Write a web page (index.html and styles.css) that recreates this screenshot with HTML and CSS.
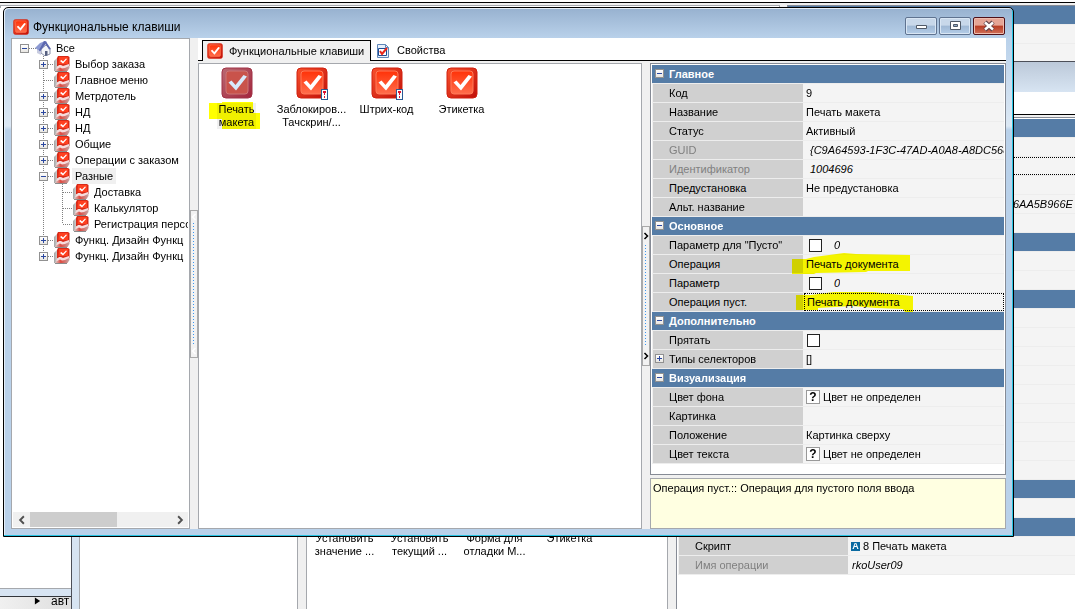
FILE: index.html
```html
<!DOCTYPE html>
<html lang="ru">
<head>
<meta charset="utf-8">
<title>Функциональные клавиши</title>
<link rel="stylesheet" href="styles.css">
</head>
<body>
<svg class="defs" aria-hidden="true">
  <defs>
    <linearGradient id="red" x1="0" y1="0" x2="1" y2="1"><stop offset="0" stop-color="#f8512c"/><stop offset="1" stop-color="#c00f08"/></linearGradient>
    <linearGradient id="redIn" x1="0" y1="0" x2="0" y2="1"><stop offset="0" stop-color="#ff3208"/><stop offset="1" stop-color="#ff6d4c"/></linearGradient>
    <linearGradient id="dim" x1="0" y1="0" x2="1" y2="1"><stop offset="0" stop-color="#b96a72"/><stop offset="1" stop-color="#a3243c"/></linearGradient>
    <linearGradient id="flap" x1="0" y1="0" x2="1" y2="0"><stop offset="0" stop-color="#d8d0d0"/><stop offset=".4" stop-color="#e0483e"/><stop offset="1" stop-color="#c4a8a8"/></linearGradient>
    <linearGradient id="paper" x1="0" y1="0" x2="1" y2="0"><stop offset="0" stop-color="#a4a4a4"/><stop offset="1" stop-color="#f2f2f2"/></linearGradient>
    <symbol id="key" viewBox="0 0 32 32">
      <rect x="1" y="1" width="30" height="30" rx="4" fill="url(#red)" stroke="#d0200f"/>
      <rect x="5" y="4" width="22" height="23" rx="3" fill="url(#redIn)" stroke="#ff7a58"/>
      <path d="M7.500 15.500l3-2 4 4.500 8-10 3.500 1.500-11 14z" fill="#fff"/>
    </symbol>
    <symbol id="key-dim" viewBox="0 0 32 32">
      <rect x="1" y="1" width="30" height="30" rx="4" fill="url(#dim)" stroke="#a03246"/>
      <rect x="5" y="4" width="22" height="23" rx="3" fill="#c9534b" stroke="#cc7676"/>
      <path d="M7.500 15.500l3-2 4 4.500 8-10 3.500 1.500-11 14z" fill="#d8eafc"/>
    </symbol>
    <symbol id="folder" viewBox="0 0 16 16">
      <path d="M0 5l3-3h3v8l-4 5H0z" fill="url(#paper)"/>
      <path d="M4 0h10l1.500 1v9H3V2z" fill="#d82a18"/>
      <path d="M5 1h9v7H4.500z" fill="#ff4020"/>
      <path d="M6 5l1.500-1L9 5.500l3-3 1 .5L9 7.500z" fill="#fff"/>
      <path d="M1 15l3-5h3l2 1 6.500-2v3l-2 3z" fill="url(#flap)"/>
      <path d="M3 11l2-2h2l2 1 6-2v2l-4 2-3 .5-2-1-4 2z" fill="#f6dcdc"/>
      <path d="M1 15.500h12" stroke="#8c8c8c"/>
    </symbol>
    <symbol id="home" viewBox="0 0 16 16">
      <path d="M6 9l5-4 4 4v5l-5 2-4-3z" fill="#f4f6fa" stroke="#8a90a8"/>
      <path d="M2 9v4l4 2V9z" fill="#c8cce0"/>
      <path d="M0 8l5-5 5-2 2 1-7 9z" fill="#8c99d2"/>
      <path d="M9 1l2 .5L16 9l-2 .5L10.500 4 5 11.500 4 10z" fill="#5c68b0"/>
      <path d="M10 11h2.500v4.500l-2.500.5z" fill="#566080"/>
    </symbol>
    <symbol id="props" viewBox="0 0 14 16">
      <path d="M1.500 1.500h8l3 3v10h-11z" fill="#e7f0fc" stroke="#5f86b8"/>
      <path d="M9.500 1.500v3h3" fill="none" stroke="#5f86b8"/>
      <path d="M2.500 5.500h8v7h-8z" fill="#fff" stroke="#1c4c94"/>
      <path d="M4 8l2 3 5-6" fill="none" stroke="#e8281c" stroke-width="2"/>
    </symbol>
    <symbol id="alert" viewBox="0 0 7 11">
      <path d="M0 0h7v11H0z" fill="#2c5a94"/>
      <path d="M1 1h5v9H1z" fill="#fff"/>
      <path d="M3 2h1v4H3zM3 7h1v2H3z" fill="#e01030"/>
      <path d="M2 2h3v2H2z" fill="#e01030"/>
    </symbol>
    <symbol id="chev" viewBox="0 0 8 8"><path d="M2.500 1l3 3-3 3" fill="none" stroke="currentColor" stroke-width="1.500"/></symbol>
  </defs>
</svg>

<main class="desktop">

  <section class="window back-top" aria-label="Окно">
    <div class="panel"></div>
    <table class="grid">
      <tbody>
        <tr class="group"><th colspan="2"></th></tr>
        <tr><th></th><td></td></tr>
        <tr><th></th><td></td></tr>
      </tbody>
    </table>
  </section>

  <section class="window back-left" aria-label="Окно меню">
    <div class="blank"></div>
    <div class="edge"></div>
    <div class="menu-strip"><svg viewBox="0 0 8 8"><path d="M1 0l6 4-6 4z"/></svg><span>авт</span></div>
  </section>

  <section class="window back-main" aria-label="Окно операций">
    <div class="back-title"></div>
    <div class="back-tabs"></div>
    <div class="back-body">
      <div class="panel back-tree"></div>
      <ul class="panel keys back-keys">
        <li>Установить значение ...</li>
        <li>Установить текущий ...</li>
        <li>Форма для отладки М...</li>
        <li>Этикетка</li>
      </ul>
      <div class="grid-box back-grid">
        <table class="grid">
          <colgroup><col class="name-wide"><col></colgroup>
          <tbody>
            <tr class="group"><th colspan="2"></th></tr>
            <tr><th></th><td></td></tr>
            <tr class="focus"><th></th><td><span></span></td></tr>
            <tr><th></th><td></td></tr>
            <tr><th></th><td class="tail"><i>D6AA5B966E</i></td></tr>
            <tr><th></th><td></td></tr>
            <tr class="group"><th colspan="2"></th></tr>
            <tr><th></th><td></td></tr>
            <tr><th></th><td></td></tr>
            <tr class="group"><th colspan="2"></th></tr>
            <tr><th></th><td></td></tr>
            <tr><th></th><td></td></tr>
            <tr><th></th><td></td></tr>
            <tr><th></th><td></td></tr>
            <tr><th></th><td></td></tr>
            <tr><th></th><td></td></tr>
            <tr><th></th><td></td></tr>
            <tr><th></th><td></td></tr>
            <tr><th></th><td></td></tr>
            <tr class="group"><th colspan="2"></th></tr>
            <tr><th></th><td></td></tr>
            <tr class="group"><th colspan="2"></th></tr>
            <tr><th>Скрипт</th><td><span><b class="script">A</b>8 Печать макета</span></td></tr>
            <tr class="off"><th>Имя операции</th><td><i class="flush">rkoUser09</i></td></tr>
          </tbody>
        </table>
      </div>
    </div>
  </section>

  <section class="window front" aria-label="Функциональные клавиши">
    <header class="title">
      <svg class="ico"><use href="#key"/></svg>
      <h1>Функциональные клавиши</h1>
      <div class="sys">
        <button type="button" aria-label="Свернуть"><svg viewBox="0 0 30 16"><path d="M10.500 7.500h10v3h-10z" fill="#fff" stroke="#505a68"/></svg></button>
        <button type="button" aria-label="Развернуть"><svg viewBox="0 0 30 16"><path d="M10.500 3.500h10v8h-10z" fill="#fff" stroke="#505a68"/><path d="M13.500 6.500h4v2h-4z" fill="#8fa9c8" stroke="#505a68"/></svg></button>
        <button type="button" class="close" aria-label="Закрыть"><svg viewBox="0 0 30 16"><path d="M11 4l8 8M19 4l-8 8" stroke="#5c4048" stroke-width="4.500"/><path d="M11 4.500l8 7M19 4.500l-8 7" stroke="#fff" stroke-width="2.500"/></svg></button>
      </div>
    </header>

    <div class="body">
      <nav class="panel tree" aria-label="Группы">
        <ul>
          <li>
            <div class="node"><button type="button" class="box minus" aria-label="Свернуть"></button><svg class="ico"><use href="#home"/></svg><span>Все</span></div>
            <ul>
              <li><div class="node"><button type="button" class="box plus" aria-label="Развернуть"></button><svg class="ico"><use href="#folder"/></svg><span>Выбор заказа</span></div></li>
              <li><div class="node leaf"><svg class="ico"><use href="#folder"/></svg><span>Главное меню</span></div></li>
              <li><div class="node"><button type="button" class="box plus" aria-label="Развернуть"></button><svg class="ico"><use href="#folder"/></svg><span>Метрдотель</span></div></li>
              <li><div class="node"><button type="button" class="box plus" aria-label="Развернуть"></button><svg class="ico"><use href="#folder"/></svg><span>НД</span></div></li>
              <li><div class="node"><button type="button" class="box plus" aria-label="Развернуть"></button><svg class="ico"><use href="#folder"/></svg><span>НД</span></div></li>
              <li><div class="node"><button type="button" class="box plus" aria-label="Развернуть"></button><svg class="ico"><use href="#folder"/></svg><span>Общие</span></div></li>
              <li><div class="node"><button type="button" class="box plus" aria-label="Развернуть"></button><svg class="ico"><use href="#folder"/></svg><span>Операции с заказом</span></div></li>
              <li>
                <div class="node current"><button type="button" class="box minus" aria-label="Свернуть"></button><svg class="ico"><use href="#folder"/></svg><span>Разные</span></div>
                <ul>
                  <li><div class="node leaf"><svg class="ico"><use href="#folder"/></svg><span>Доставка</span></div></li>
                  <li><div class="node leaf"><svg class="ico"><use href="#folder"/></svg><span>Калькулятор</span></div></li>
                  <li><div class="node leaf"><svg class="ico"><use href="#folder"/></svg><span>Регистрация персо</span></div></li>
                </ul>
              </li>
              <li><div class="node"><button type="button" class="box plus" aria-label="Развернуть"></button><svg class="ico"><use href="#folder"/></svg><span>Функц. Дизайн Функц</span></div></li>
              <li><div class="node"><button type="button" class="box plus" aria-label="Развернуть"></button><svg class="ico"><use href="#folder"/></svg><span>Функц. Дизайн Функц</span></div></li>
            </ul>
          </li>
        </ul>
        <div class="hscroll">
          <button type="button" aria-label="Влево"><svg class="flip"><use href="#chev"/></svg></button>
          <div class="track"><div class="thumb"></div></div>
          <button type="button" aria-label="Вправо"><svg><use href="#chev"/></svg></button>
        </div>
      </nav>

      <div class="splitter"><div class="grip pale"><svg class="flip"><use href="#chev"/></svg><i></i><svg class="flip"><use href="#chev"/></svg></div></div>

      <div class="work">
        <div class="tabs" role="tablist">
          <button type="button" role="tab" aria-selected="true" class="tab on"><svg class="ico"><use href="#key"/></svg>Функциональные клавиши</button>
          <button type="button" role="tab" aria-selected="false" class="tab"><svg class="ico"><use href="#props"/></svg>Свойства</button>
        </div>
        <div class="panes">
          <ul class="panel keys">
            <li class="picked"><svg class="big"><use href="#key-dim"/></svg><span>Печать<br>макета</span>
              <svg class="mark" viewBox="0 0 52 28"><path d="M0 1H13V0H44V11H51V27H13V17H0z"/></svg></li>
            <li><svg class="big"><use href="#key"/></svg><svg class="alert"><use href="#alert"/></svg><span>Заблокиров...<br>Тачскрин/...</span></li>
            <li><svg class="big"><use href="#key"/></svg><svg class="alert"><use href="#alert"/></svg><span>Штрих-код</span></li>
            <li><svg class="big"><use href="#key"/></svg><span>Этикетка</span></li>
          </ul>

          <div class="splitter"><div class="grip"><svg><use href="#chev"/></svg><i></i><svg><use href="#chev"/></svg></div></div>

          <div class="side">
            <div class="grid-box">
              <table class="grid">
                <colgroup><col class="name"><col></colgroup>
                <tbody>
                  <tr class="group"><th colspan="2"><button type="button" class="box minus" aria-label="Свернуть"></button>Главное</th></tr>
                  <tr><th>Код</th><td>9</td></tr>
                  <tr><th>Название</th><td>Печать макета</td></tr>
                  <tr><th>Статус</th><td>Активный</td></tr>
                  <tr class="off"><th>GUID</th><td><i>{C9A64593-1F3C-47AD-A0A8-A8DC568</i></td></tr>
                  <tr class="off"><th>Идентификатор</th><td><i>1004696</i></td></tr>
                  <tr><th>Предустановка</th><td>Не предустановка</td></tr>
                  <tr><th>Альт. название</th><td></td></tr>
                  <tr class="group"><th colspan="2"><button type="button" class="box minus" aria-label="Свернуть"></button>Основное</th></tr>
                  <tr><th><label for="p1">Параметр для "Пусто"</label></th><td class="check"><span><input type="checkbox" id="p1"><i>0</i></span></td></tr>
                  <tr><th>Операция</th><td class="marked">Печать документа<svg class="mark" viewBox="0 0 122 22"><path d="M0 6H14L22 4L52 0L64 1L118 2V18L76 18L74 19L24 20L22 21H0z"/></svg></td></tr>
                  <tr><th><label for="p2">Параметр</label></th><td class="check"><span><input type="checkbox" id="p2"><i>0</i></span></td></tr>
                  <tr class="focus"><th>Операция пуст.</th><td class="marked"><span>Печать документа</span><svg class="mark" viewBox="0 0 122 22"><path d="M4 4H19L42 1L81 1L100 3L121 5V21H113L111 18L84 17L60 15L26 17V19H4z"/></svg></td></tr>
                  <tr class="group"><th colspan="2"><button type="button" class="box minus" aria-label="Свернуть"></button>Дополнительно</th></tr>
                  <tr><th><label for="p3">Прятать</label></th><td><span><input type="checkbox" id="p3"></span></td></tr>
                  <tr><th><button type="button" class="box plus" aria-label="Развернуть"></button>Типы селекторов</th><td>[]</td></tr>
                  <tr class="group"><th colspan="2"><button type="button" class="box minus" aria-label="Свернуть"></button>Визуализация</th></tr>
                  <tr><th>Цвет фона</th><td><span><b class="swatch">?</b>Цвет не определен</span></td></tr>
                  <tr><th>Картинка</th><td></td></tr>
                  <tr><th>Положение</th><td>Картинка сверху</td></tr>
                  <tr><th>Цвет текста</th><td><span><b class="swatch">?</b>Цвет не определен</span></td></tr>
                </tbody>
              </table>
            </div>
            <p class="hint">Операция пуст.:: Операция для пустого поля ввода</p>
          </div>
        </div>
      </div>
    </div>
  </section>
</main>
</body>
</html>
```

FILE: styles.css
```css
* { box-sizing: border-box; }

body {
  margin: 0;
  font: 11px/13px "Liberation Sans", Arial, sans-serif;
  color: #000;
  background: #fff;
}

ul { list-style: none; margin: 0; padding: 0; }
button { font: inherit; color: inherit; padding: 0; margin: 0; }
.defs { position: absolute; width: 0; height: 0; }

.desktop {
  position: relative;
  height: 100vh;
  min-height: 560px;
  overflow: hidden;
}

.window { position: absolute; display: flex; flex-direction: column; }
.panel { background: #fff; border: 1px solid #a5a8ad; }
.ico { width: 16px; height: 16px; flex: none; }

/* windows behind the dialog */
.back-top {
  inset: 2px 0 auto 0;
  flex-direction: row;
  gap: 7px;
  height: 60px;
  padding-top: 2px;
  border-top: 1px solid #000;
  background: #f0f0f0;
}
.back-top .panel { width: 780px; background: #fff; }
.back-top .grid { flex: 1; border-top: 1px solid #868b95; border-left: 1px solid #868b95; }

.back-left { left: 0; top: 8px; bottom: 0; width: 72px; background: #fff; }
.back-left .blank { flex: 1; border-bottom: 1px solid #a5a8ad; }
.back-left .edge { height: 8px; background: #d7e4f2; border-bottom: 1px solid #33363b; }
.menu-strip {
  display: flex;
  gap: 10px;
  height: 12px;
  padding-left: 34px;
  overflow: hidden;
  font-size: 12px;
  line-height: 8px;
  background: linear-gradient(90deg, #f0f0f0, #dedede);
}
.menu-strip svg { width: 7px; height: 8px; flex: none; }

.back-main {
  inset: 61px -40px 0 71px;
  border: solid #4c4f58;
  border-width: 1px 0 0 1px;
  background: #d7e4f2;
}
.back-title { height: 30px; background: linear-gradient(#bcc9d9, #d7e4f2); }
.back-tabs { height: 23px; margin-left: 7px; background: #fff; border-bottom: 1px solid #000; }
.back-body {
  flex: 1;
  display: flex;
  gap: 8px;
  min-height: 0;
  margin-left: 7px;
  padding-top: 2px;
  background: #f0f0f0;
}
.back-body > .panel, .back-body > .grid-box { border-bottom: 0; }
.back-tree { width: 219px; }
.back-keys { width: 362px; }
.back-keys.keys { padding-top: 414px; }
.back-grid { flex: 1; }
.script {
  width: 9px;
  height: 9px;
  font-size: 9px;
  line-height: 9px;
  text-align: center;
  color: #fff;
  background: #0a6aa1;
}

/* dialog frame */
.front {
  inset: 7px 61px 72px 3px;
  padding: 0 7px 7px;
  border: 1px solid #000;
  border-radius: 5px 5px 0 0;
  background: linear-gradient(#97b1cf, #b9d1ea 30px, #dce8f4 118px, #b9d1ea 122px);
  box-shadow: inset -1px -1px #27c4e4, inset 1px 1px #e4eef8;
}
.title { display: flex; align-items: center; height: 30px; padding: 7px 1px 0 2px; }
h1 { flex: 1; margin: 0 0 0 4px; font: 12px/16px "Liberation Sans", Arial, sans-serif; }
.sys { display: flex; gap: 2px; align-self: flex-start; }
.sys button {
  width: 32px;
  height: 18px;
  margin-top: 2px;
  border: 1px solid #5f7390;
  border-radius: 2px;
  background: linear-gradient(#c8d8ea 45%, #9fb8d4 50%, #b4cde8);
  box-shadow: inset 0 0 0 1px #d9e6f4;
}
.sys .close {
  border-color: #4f1018;
  background: linear-gradient(#e5a596 45%, #b83c24 50%, #d0705a);
  box-shadow: inset 0 0 0 1px #eebcae;
}
.sys svg { display: block; width: 30px; height: 16px; }

.body { flex: 1; display: flex; min-height: 0; background: #f0f0f0; }

/* tree */
.tree {
  width: 179px;
  flex: none;
  display: flex;
  flex-direction: column;
  justify-content: space-between;
  padding: 1px;
}
.tree > ul { padding-left: 7px; overflow: hidden; }
.tree li ul { padding-left: 19px; }
.tree li { position: relative; }
.tree li li::before {
  content: "";
  position: absolute;
  left: 4px;
  top: 0;
  width: 1px;
  height: 100%;
  background: repeating-linear-gradient(#808080 0 1px, #fff 1px 2px);
}
.tree li li:last-child::before { height: 8px; }
.node {
  position: relative;
  display: flex;
  align-items: center;
  height: 16px;
  line-height: 16px;
  white-space: nowrap;
  background: repeating-linear-gradient(90deg, #808080 0 1px, transparent 1px 2px) 5px 8px / 11px 1px no-repeat;
}
.node .ico { margin: 0 2px 0 6px; }
.node.leaf .ico { margin-left: 15px; }
.node span { padding: 0 3px; }
.node.current span { background: #f0f0f0; }
.box {
  position: relative;
  width: 9px;
  height: 9px;
  flex: none;
  border: 1px solid #919191;
  background:
    linear-gradient(#2b48a0, #2b48a0) 1px 3px / 5px 1px no-repeat,
    linear-gradient(#fff, #e8e6e2);
}
.box.plus {
  background:
    linear-gradient(#2b48a0, #2b48a0) 1px 3px / 5px 1px no-repeat,
    linear-gradient(#2b48a0, #2b48a0) 3px 1px / 1px 5px no-repeat,
    linear-gradient(#fff, #e8e6e2);
}

.hscroll { display: flex; height: 15px; background: #f0f0f0; }
.hscroll button { width: 17px; border: 0; background: none; color: #505050; }
.hscroll svg { width: 10px; height: 10px; display: block; margin: 0 auto; }
.flip { transform: scaleX(-1); }
.track { flex: 1; }
.thumb { width: 62%; height: 15px; background: #cdcdcd; }

/* splitters */
.splitter { width: 8px; flex: none; display: flex; align-items: center; }
.grip {
  width: 8px;
  height: 140px;
  display: flex;
  flex-direction: column;
  align-items: center;
  border: 1px solid #a9a9a9;
  background: #f2f2f2;
}
.grip.pale { height: 148px; }
.grip svg { width: 8px; height: 18px; flex: none; }
.grip.pale svg { color: #fff; height: 12px; }
.grip i { flex: 1; width: 2px; background: repeating-linear-gradient(#3a96f0 0 1px, transparent 1px 3px) left / 1px no-repeat; }

/* tabs */
.work { flex: 1; min-width: 0; display: flex; flex-direction: column; }
.tabs {
  display: flex;
  align-items: flex-end;
  height: 23px;
  padding-left: 4px;
  background: #fff;
  box-shadow: inset 0 -1px #000;
}
.tab {
  display: flex;
  align-items: center;
  gap: 6px;
  height: 21px;
  padding: 0 4px;
  border: 0;
  background: none;
  white-space: nowrap;
}
.tab.on { width: 169px; border: solid #000; border-width: 1px 1px 0; background: #f0f0f0; }

.panes { flex: 1; display: flex; min-height: 0; padding-top: 2px; }
.keys { display: flex; align-items: flex-start; padding-top: 3px; }
.panes .keys { flex: 1; }
.keys li {
  position: relative;
  width: 75px;
  display: flex;
  flex-direction: column;
  align-items: center;
  text-align: center;
}
.big { width: 32px; height: 32px; margin-bottom: 4px; }
.alert { position: absolute; left: 47px; top: 22px; width: 7px; height: 11px; }
.picked span { padding: 0 1px; background: #f0f0f0; }
.mark { position: absolute; fill: #ff0; mix-blend-mode: multiply; }
.picked .mark { left: 10px; top: 35px; width: 52px; height: 28px; }

/* property grid */
.side { width: 356px; flex: none; display: flex; flex-direction: column; gap: 3px; }
.grid-box { flex: 1; padding: 1px; border: 1px solid #868b95; background: #fff; overflow: hidden; }
.grid { width: 100%; border-collapse: separate; border-spacing: 0; table-layout: fixed; }
.name { width: 151px; }
.name-wide { width: 170px; }
.grid th, .grid td {
  position: relative;
  height: 19px;
  padding: 0 0 0 3px;
  border-bottom: 1px solid #ededed;
  font-weight: normal;
  text-align: left;
  white-space: nowrap;
  line-height: 16px;
}
.grid th {
  padding-left: 17px;
  background: linear-gradient(#f0f0f0, #f0f0f0) left / 1px no-repeat, #d0d0d0;
}
.grid td { background: #f4f4f4; }
.grid .group th { font-weight: bold; color: #fff; background: #557ca6; }
.grid .box { position: absolute; left: 3px; top: 4px; }
.grid .off th { color: #808080; }
.grid .tail { padding-left: 153px; }
.grid td i { display: block; overflow: hidden; padding-left: 4px; }
.grid td .flush { padding-left: 1px; }
.grid td span { display: flex; align-items: center; gap: 3px; }
.grid .check span { padding-left: 2px; gap: 8px; }
.grid .marked .mark { left: -11px; top: -2px; width: 122px; height: 22px; }
.grid .focus td span { height: 18px; margin-left: -2px; padding-left: 2px; border: 1px dotted #000; }
input[type="checkbox"] {
  appearance: none;
  width: 13px;
  height: 13px;
  margin: 0 0 0 1px;
  border: 1px solid #222;
  background: #fff;
}
.swatch {
  width: 14px;
  height: 14px;
  font-size: 12px;
  line-height: 12px;
  text-align: center;
  border: 1px solid #999;
  background: #fff;
}
.hint { height: 51px; margin: 0; padding: 3px 2px; border: 1px solid #a5a8ad; background: #ffffe1; }
```
